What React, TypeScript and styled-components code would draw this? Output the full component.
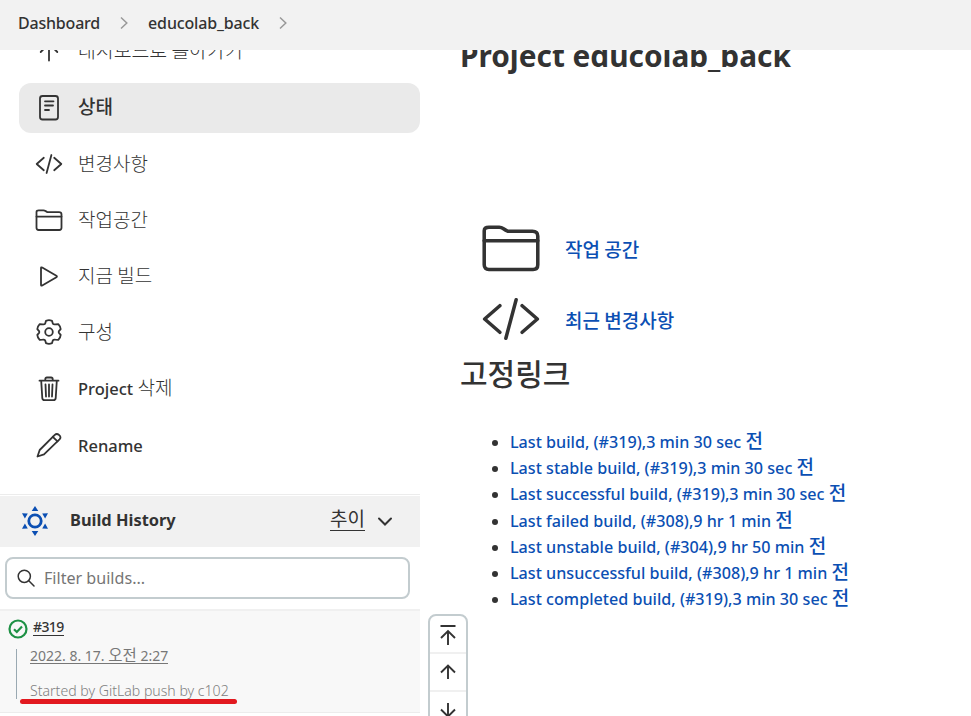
import React from 'react';
import styled, { createGlobalStyle } from 'styled-components';

const Global = createGlobalStyle`
  * { box-sizing: border-box; }
  body {
    margin: 0;
    overflow: hidden;
    background: #fff;
    color: #333;
    font-family: 'Noto Sans', 'Noto Sans CJK KR', sans-serif;
  }
  a { color: inherit; }
`;

const Page = styled.div`
  height: 716px;
  overflow: hidden;
`;

const Breadcrumbs = styled.header`
  position: relative;
  z-index: 2;
  height: 50px;
  padding: 0 0 4px 18px;
  display: flex;
  align-items: center;
  background: #f2f2f2;
  font-size: 16px;
  font-weight: 500;
`;

const Crumb = styled.span<{ $spacing?: string }>`
  letter-spacing: ${(p) => p.$spacing ?? '0'};
`;

const Separator = styled.svg`
  width: 8px;
  height: 14px;
  margin: 0 20px;
  fill: none;
  stroke: #999;
  stroke-width: 1.5;
`;

const Columns = styled.div`
  display: grid;
  grid-template-columns: 420px 1fr;
  height: 666px;
`;

const Sidebar = styled.aside`
  height: 666px;
`;

const Tasks = styled.nav`
  display: flex;
  flex-direction: column;
  gap: 6.3px;
  margin-top: -23px;
  height: 467px;
  padding-left: 19px;
`;

const Task = styled.a<{ $active?: boolean }>`
  display: flex;
  align-items: center;
  flex: none;
  height: 50px;
  padding: 0 0 2px 16px;
  gap: 15px;
  border-radius: 12px;
  background: ${(p) => (p.$active ? '#eaeaea' : 'transparent')};
  font-size: 16.5px;
  font-weight: 500;
`;

const Korean = styled.span<{ $size?: number; $weight?: number; $lift?: number }>`
  display: inline-block;
  line-height: 1;
  font-family: 'Noto Sans CJK KR', sans-serif;
  font-size: ${(p) => p.$size ?? 19}px;
  font-weight: ${(p) => p.$weight ?? 300};
  margin-bottom: ${(p) => p.$lift ?? 3}px;
`;

const TaskIcon = styled.svg`
  width: 28px;
  height: 28px;
  overflow: visible;
  fill: none;
  stroke: #333;
  stroke-width: 1.8;
  stroke-linecap: round;
  stroke-linejoin: round;
`;

const HistoryHeader = styled.div`
  display: flex;
  align-items: center;
  height: 53px;
  padding: 0 27px 0 20px;
  border-top: 1px solid #ececec;
  background: #f1f1f1;
  box-shadow: inset 0 1px #fff;
`;

const Sun = styled.svg`
  width: 30px;
  height: 32px;
  margin-right: 20px;
  fill: #0b4fb3;
`;

const HistoryTitle = styled.h2`
  flex: 1;
  margin: 0 0 3px;
  font-size: 16.4px;
  font-weight: 700;
`;

const Trend = styled.a`
  margin-right: 12px;
  margin-bottom: 3px;
  height: 23px;
  border-bottom: 1px solid #333;
`;

const Chevron = styled.svg`
  width: 16px;
  height: 16px;
  fill: none;
  stroke: #333;
  stroke-width: 2;
  stroke-linecap: round;
`;

const Filter = styled.label`
  display: flex;
  align-items: center;
  width: 405px;
  height: 42px;
  margin: 10px 0 10px 5px;
  padding-left: 10px;
  gap: 9px;
  border: 2px solid #c3cccf;
  border-radius: 8px;
  color: #757575;
  font-size: 16.1px;
  line-height: 20px;
`;

const SearchIcon = styled.svg`
  width: 18px;
  height: 18px;
  fill: none;
  stroke: #333;
  stroke-width: 1.5;
  stroke-linecap: round;
`;

const Build = styled.article`
  height: 104px;
  padding: 8px 0 0 8px;
  border-top: 2px solid #f0f0f0;
  border-bottom: 1px solid #ececec;
  background: #f8f8f8;
`;

const BuildName = styled.div`
  display: flex;
  align-items: center;
  height: 20px;
  gap: 5px;
  font-size: 14px;
  font-weight: 500;
  line-height: 16px;
`;

const BuildLink = styled.a`
  height: 17px;
  margin-bottom: 3px;
  border-bottom: 1px solid #333;
  letter-spacing: -0.6px;
`;

const StatusIcon = styled.svg`
  width: 20px;
  height: 20px;
  fill: none;
  stroke: #1e9145;
  stroke-width: 2.2;
`;

const Details = styled.div`
  display: flex;
  flex-direction: column;
  align-items: flex-start;
  height: 50px;
  margin: 10px 0 0 8px;
  padding-left: 13px;
  border-left: 1px solid #9aa9b2;
  color: #777;
  font-size: 14px;
`;

const BuildDate = styled.a`
  height: 17px;
  margin-bottom: 18px;
  margin-top: -2px;
  line-height: 17px;
  border-bottom: 1px solid #777;
  white-space: pre;
`;

const Cause = styled.span`
  position: relative;
  line-height: 18px;
  color: #808080;
  font-size: 14.1px;
  font-weight: 300;
`;

const RedMark = styled.span`
  position: absolute;
  left: -10px;
  top: 17px;
  width: 217px;
  height: 5px;
  border-radius: 3px;
  background: #e2191f;
`;

const Main = styled.main`
  position: relative;
  padding-left: 41px;
`;

const Title = styled.h1`
  margin: -15px 0 0 -1px;
  height: 41px;
  line-height: 41px;
  font-size: 29.8px;
  font-weight: 700;
`;

const Shortcuts = styled.div`
  display: flex;
  flex-direction: column;
  gap: 11px;
  margin-top: 142px;
  padding-left: 20px;
`;

const Shortcut = styled.a`
  display: flex;
  align-items: center;
  height: 60px;
  gap: 24px;
  color: #0b4fb3;
`;

const LargeIcon = styled(TaskIcon)`
  width: 60px;
  height: 60px;
  stroke-width: 1.65;
`;

const SectionTitle = styled.h2`
  margin: 7px 0 0 -1px;
  height: 40px;
  line-height: 40px;
  font-weight: 500;
`;

const Permalinks = styled.ul`
  margin: 33px 0 0;
  padding: 0 0 0 49px;
`;

const Permalink = styled.li`
  height: 26.2px;
  line-height: 26.2px;
  font-size: 16.15px;
  font-weight: 500;
  a { color: #0b4fb3; }
`;

const ScrollControls = styled.div`
  position: absolute;
  left: 8px;
  top: 564px;
  width: 40px;
  height: 120px;
  display: flex;
  flex-direction: column;
  border: 2px solid #c3cccf;
  border-radius: 8px;
  background: #fff;
`;

const ScrollButton = styled.div`
  display: flex;
  align-items: center;
  justify-content: center;
  flex: none;
  height: 38px;
  padding-right: 1px;
  border-bottom: 2px solid #f0f0f0;
`;

const ArrowIcon = styled.svg`
  width: 18px;
  height: 22px;
  fill: none;
  stroke: #333;
  stroke-width: 1.9;
  overflow: visible;
`;

const FolderPaths = () => (
  <>
    <path d="M1.5 7V6Q1.5 4.3 3.7 4.3H8.5Q9.5 4.3 10.5 5T12.5 6.2H24Q26.5 6.2 26.5 8.5V21.8Q26.5 24 24.3 24H3.7Q1.5 24 1.5 21.8Z" />
    <path d="M1.5 10.6H26.5" />
  </>
);

const CodePaths = () => <path d="M8.8 7.8 1.7 14l7.1 6.2M19.2 7.8l7.1 6.2-7.1 6.2M16.4 5l-4.8 18" />;

const gear =
  'M11 2.8Q14 1.6 17 2.8L17.8 5.6Q18.8 6.7 20.3 6.3L23.3 6.1Q25.5 8.4 25.7 11.1L23.9 13.2Q23.4 14 23.9 14.8L25.7 16.9Q25.5 19.6 23.3 21.9L20.3 21.7Q18.8 21.3 17.8 22.4L17 25.2Q14 26.4 11 25.2L10.2 22.4Q9.2 21.3 7.7 21.7L4.7 21.9Q2.5 19.6 2.3 16.9L4.1 14.8Q4.6 14 4.1 13.2L2.3 11.1Q2.5 8.4 4.7 6.1L7.7 6.3Q9.2 6.7 10.2 5.6Z';

const tasks: { icon: React.ReactNode; label: React.ReactNode; active?: boolean }[] = [
  { icon: <path d="M14 23.5V6M5.7 15 14 6.5 22.3 15" />, label: <Korean $size={19.4}>대시보드로 돌아가기</Korean> },
  {
    icon: (
      <>
        <rect x="5" y="3" width="18" height="23.5" rx="2.5" />
        <path d="M10 8.3h8.5M10 12.5h8M10 17h4" />
      </>
    ),
    label: <Korean $weight={500}>상태</Korean>,
    active: true,
  },
  { icon: <CodePaths />, label: <Korean>변경사항</Korean> },
  { icon: <FolderPaths />, label: <Korean>작업공간</Korean> },
  {
    icon: <path d="M6 6.2v16.6q0 1.3 1.2.7l14.2-8.2q1.1-.8 0-1.6L7.2 5.5Q6 4.9 6 6.2Z" />,
    label: <Korean>지금 빌드</Korean>,
  },
  {
    icon: (
      <>
        <path d={gear} />
        <circle cx="14" cy="14" r="3.8" />
      </>
    ),
    label: <Korean>구성</Korean>,
  },
  {
    icon: (
      <>
        <path d="M4.5 5.7h19M6.2 5.7l1.1 17.5q.2 2 2.2 2h9q2 0 2.2-2l1.1-17.5M10.3 5.7V4.1q0-1.6 1.6-1.6h4.2q1.6 0 1.6 1.6v1.6" />
        <path d="M10.5 9.5l.5 12M14 9.5v12M17.5 9.5l-.5 12" />
      </>
    ),
    label: (
      <span>
        Project <Korean $lift={0}>삭제</Korean>
      </span>
    ),
  },
  {
    icon: (
      <>
        <path d="M2.5 25.5 4.7 19 19.8 3.8q2-1.8 4.4.3t.3 4.3L9 23.4Z" />
        <path d="M17.8 5.8 22.5 10.3" />
      </>
    ),
    label: 'Rename',
  },
];

const permalinks = [
  'Last build, (#319),3 min 30 sec ',
  'Last stable build, (#319),3 min 30 sec ',
  'Last successful build, (#319),3 min 30 sec ',
  'Last failed build, (#308),9 hr 1 min ',
  'Last unstable build, (#304),9 hr 50 min ',
  'Last unsuccessful build, (#308),9 hr 1 min ',
  'Last completed build, (#319),3 min 30 sec ',
];

const Arrow = () => (
  <Separator viewBox="0 0 8 14">
    <path d="M1 1.5 6.8 7 1 12.5" />
  </Separator>
);

export default function App() {
  return (
    <Page>
      <Global />
      <Breadcrumbs>
        <Crumb $spacing="-0.2px">Dashboard</Crumb>
        <Arrow />
        <Crumb $spacing="-0.15px">educolab_back</Crumb>
        <Arrow />
      </Breadcrumbs>
      <Columns>
        <Sidebar>
          <Tasks>
            {tasks.map((task, i) => (
              <Task key={i} $active={task.active}>
                <TaskIcon viewBox="0 0 28 28">{task.icon}</TaskIcon>
                {task.label}
              </Task>
            ))}
          </Tasks>
          <HistoryHeader>
            <Sun viewBox="0 0 30 32">
              <circle cx="15" cy="16" r="6.2" fill="none" stroke="#0b4fb3" strokeWidth="2.8" />
              <path d="M15 1l3.3 5h-6.6zM15 31l3.3-5h-6.6zM2 8.3l5.8.3-2.9 5zM28 8.3l-5.8.3 2.9 5zM2 23.7l5.8-.3-2.9-5zM28 23.7l-5.8-.3 2.9-5z" />
            </Sun>
            <HistoryTitle>Build History</HistoryTitle>
            <Trend>
              <Korean $weight={400}>추이</Korean>
            </Trend>
            <Chevron viewBox="0 0 16 16">
              <path d="M2 5.5 8 11.5 14 5.5" />
            </Chevron>
          </HistoryHeader>
          <Filter>
            <SearchIcon viewBox="0 0 18 18">
              <circle cx="7.3" cy="7.3" r="6.1" />
              <path d="M11.8 11.8 17 17" />
            </SearchIcon>
            Filter builds...
          </Filter>
          <Build>
            <BuildName>
              <StatusIcon viewBox="0 0 20 20">
                <circle cx="10" cy="10" r="8.5" />
                <path d="M6 10.3 8.8 13 14 7.5" />
              </StatusIcon>
              <BuildLink>#319</BuildLink>
            </BuildName>
            <Details>
              <BuildDate>
                2022. 8. 17. <Korean $size={15.5} $weight={400} $lift={0}>오전</Korean> 2:27
              </BuildDate>
              <Cause>
                Started by GitLab push by c102
                <RedMark />
              </Cause>
            </Details>
          </Build>
        </Sidebar>
        <Main>
          <Title>Project educolab_back</Title>
          <Shortcuts>
            <Shortcut>
              <LargeIcon viewBox="0 0 28 28">
                <FolderPaths />
              </LargeIcon>
              <Korean $weight={500} $lift={0}>작업 공간</Korean>
            </Shortcut>
            <Shortcut>
              <LargeIcon viewBox="0 0 28 28">
                <CodePaths />
              </LargeIcon>
              <Korean $weight={500} $lift={0}>최근 변경사항</Korean>
            </Shortcut>
          </Shortcuts>
          <SectionTitle>
            <Korean $size={30} $weight={500}>
              고정링크
            </Korean>
          </SectionTitle>
          <Permalinks>
            {permalinks.map((text) => (
              <Permalink key={text}>
                <a>
                  {text}
                  <Korean $weight={500} $lift={0}>전</Korean>
                </a>
              </Permalink>
            ))}
          </Permalinks>
          <ScrollControls>
            <ScrollButton>
              <ArrowIcon viewBox="0 0 18 22">
                <path d="M1.5 3h15M9 22V8M2 15l7-7 7 7" />
              </ArrowIcon>
            </ScrollButton>
            <ScrollButton>
              <ArrowIcon viewBox="0 0 18 22">
                <path d="M9 18V4.5M2 11.5l7-7 7 7" />
              </ArrowIcon>
            </ScrollButton>
            <ScrollButton>
              <ArrowIcon viewBox="0 0 18 22">
                <path d="M9 4v13.5M2 10.5l7 7 7-7" />
              </ArrowIcon>
            </ScrollButton>
          </ScrollControls>
        </Main>
      </Columns>
    </Page>
  );
}
